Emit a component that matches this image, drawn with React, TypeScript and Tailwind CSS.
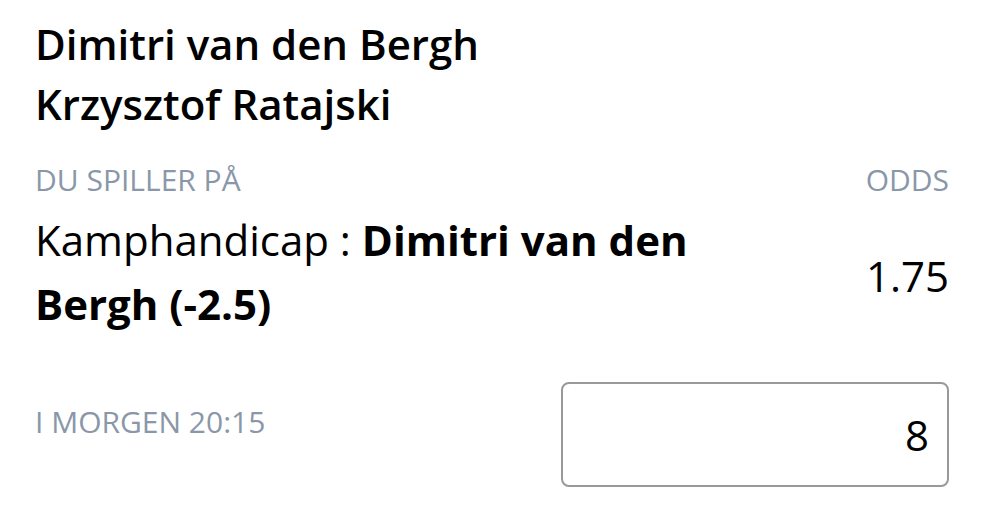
export default function App() {
  return (
    <div
      className="bg-white w-[1001px] h-[515px] pl-[35px] pr-[52px] pt-[14px] text-black"
      style={{ fontFamily: '"Open Sans", "Noto Sans", sans-serif' }}
    >
      {/* Match */}
      <div className="text-[42px] leading-[60px] font-semibold">
        <div>Dimitri van den Bergh</div>
        <div>Krzysztof Ratajski</div>
      </div>

      {/* Labels */}
      <div className="flex justify-between mt-[28px] text-[30px] leading-[36px] text-[#8a97a8] uppercase">
        <span>Du spiller på</span>
        <span>Odds</span>
      </div>

      {/* Selection */}
      <div className="flex justify-between items-start mt-[10px]">
        <div className="w-[700px] text-[42px] leading-[64px]">
          Kamphandicap : <span className="font-bold">Dimitri van den Bergh (-2.5)</span>
        </div>
        <div className="text-[42px] leading-[42px] font-medium mt-[47px]">1.75</div>
      </div>

      {/* Time + stake */}
      <div className="flex justify-between items-start mt-[46px]">
        <div className="text-[30px] leading-[36px] text-[#8a97a8] mt-[22px]">I MORGEN 20:15</div>
        <div className="w-[388px] h-[105px] border-2 border-[#999999] rounded-[8px] flex items-center justify-end pr-[18px] text-[42px]">
          8
        </div>
      </div>
    </div>
  );
}
